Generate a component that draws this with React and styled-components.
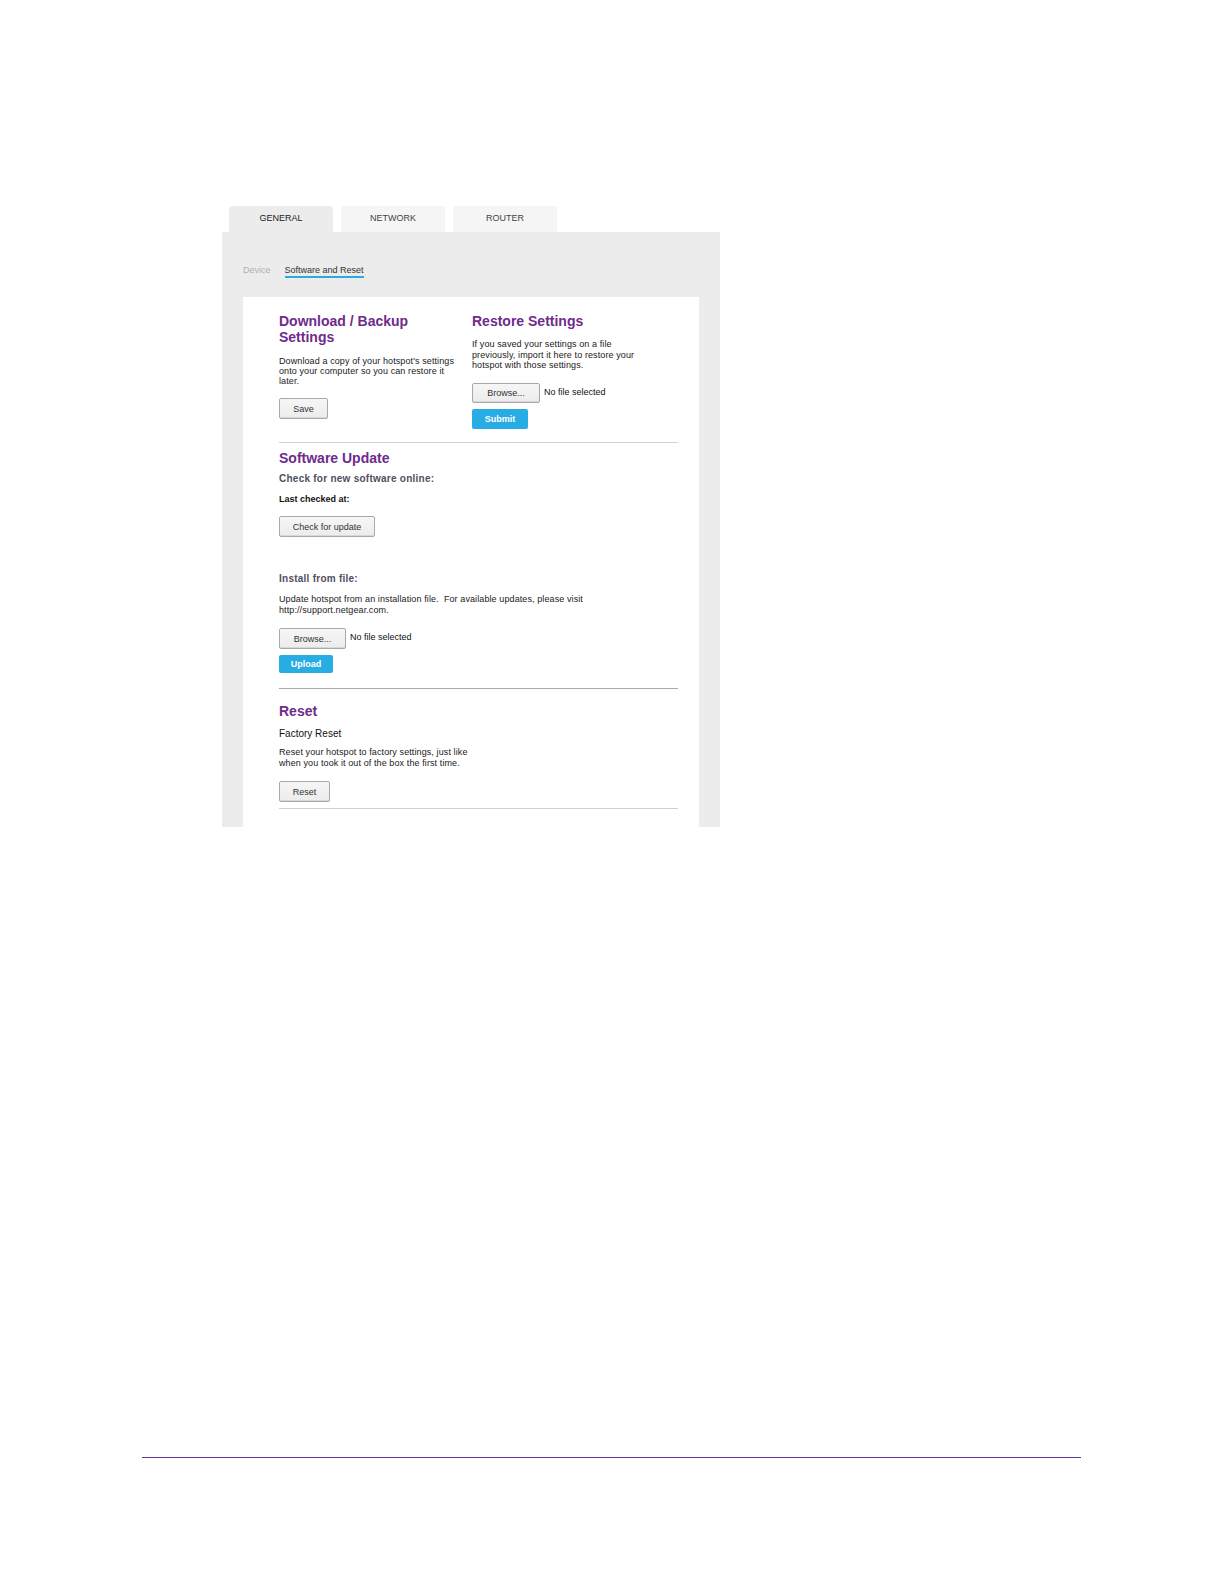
import React from "react";
import styled, { createGlobalStyle } from "styled-components";

const Global = createGlobalStyle`
  html, body { margin: 0; padding: 0; background: #ffffff; }
  body { font-family: "Liberation Sans", Arial, sans-serif; color: #222; }
  * { box-sizing: border-box; }
`;

const Page = styled.div`
  min-height: 1585px;
  padding-top: 206px;
  display: flex;
  flex-direction: column;
  align-items: flex-start;
`;

const Window = styled.div`
  margin-left: 222px;
  width: 498px;
  display: flex;
  flex-direction: column;
`;

const TabBar = styled.div`
  display: flex;
  gap: 8px;
  padding-left: 7px;
`;

const Tab = styled.div`
  width: 104px;
  height: 26px;
  border-radius: 4px 4px 0 0;
  background: ${(p) => (p.$active ? "#ececec" : "#f5f5f5")};
  color: ${(p) => (p.$active ? "#222" : "#444")};
  font-size: 9px;
  display: flex;
  align-items: center;
  justify-content: center;
  padding-bottom: 2px;
`;

const Panel = styled.div`
  background: #ececec;
  height: 595px;
  overflow: hidden;
  padding: 0 21px;
  display: flex;
  flex-direction: column;
`;

const SubNav = styled.div`
  height: 65px;
  padding-top: 32px;
  display: flex;
  align-items: flex-start;
  gap: 14px;
`;

const SubLink = styled.div`
  font-size: 9px;
  line-height: 12px;
  color: ${(p) => (p.$active ? "#333" : "#b0b0b0")};
  border-bottom: 2px solid ${(p) => (p.$active ? "#29abe2" : "transparent")};
`;

const Card = styled.div`
  background: #ffffff;
  flex: 1;
  padding: 16px 21px 0 36px;
  display: flex;
  flex-direction: column;
`;

const TopRow = styled.div`
  display: grid;
  grid-template-columns: 193px 1fr;
  padding-bottom: 13px;
`;

const Col = styled.div`
  display: flex;
  flex-direction: column;
  align-items: flex-start;
`;

const Heading = styled.h2`
  margin: ${(p) => p.$mt || 0}px 0 0 0;
  font-size: 14px;
  line-height: 16px;
  font-weight: bold;
  color: #6e2b8c;
`;

const Para = styled.p`
  margin: ${(p) => p.$mt || 0}px 0 0 0;
  font-size: 9px;
  line-height: ${(p) => p.$lh || 10}px;
  letter-spacing: 0.1px;
  color: #1a1a1a;
`;

const SubHead = styled.div`
  margin-top: ${(p) => p.$mt || 0}px;
  font-size: 10px;
  line-height: 14px;
  font-weight: bold;
  letter-spacing: 0.25px;
  color: #505060;
`;

const Label = styled.div`
  margin-top: ${(p) => p.$mt || 0}px;
  font-size: 9px;
  line-height: 12px;
  font-weight: bold;
  color: #111;
`;

const Plain = styled.div`
  margin-top: ${(p) => p.$mt || 0}px;
  font-size: 10px;
  line-height: 13px;
  color: #111;
`;

const Button = styled.button`
  margin-top: ${(p) => p.$mt || 0}px;
  width: ${(p) => p.$w}px;
  height: ${(p) => p.$h || 21}px;
  padding: 0;
  font-family: "Liberation Sans", Arial, sans-serif;
  font-size: 9px;
  color: #333;
  background: linear-gradient(#f6f6f6, #ececec);
  border: 1px solid #a8a8a8;
  border-radius: 2px;
  box-shadow: inset 0 -1px 0 #d8d8d8;
`;

const BlueButton = styled.button`
  margin-top: ${(p) => p.$mt || 0}px;
  width: ${(p) => p.$w}px;
  height: ${(p) => p.$h || 19}px;
  padding: 0;
  font-family: "Liberation Sans", Arial, sans-serif;
  font-size: 9px;
  font-weight: bold;
  color: #ffffff;
  background: #27ade3;
  border: none;
  border-radius: 2px;
`;

const FileRow = styled.div`
  margin-top: ${(p) => p.$mt || 0}px;
  display: flex;
  align-items: flex-start;
  gap: 4px;
`;

const FileName = styled.span`
  font-size: 9px;
  line-height: 12px;
  padding-top: 3px;
  color: #111;
`;

const Section = styled.div`
  display: flex;
  flex-direction: column;
  align-items: flex-start;
  padding-bottom: ${(p) => p.$pb || 0}px;
`;

const Divider = styled.div`
  height: 1px;
  background: ${(p) => p.$c || "#d4d4d4"};
`;

const FootRule = styled.div`
  margin-top: 630px;
  margin-left: 142px;
  width: 939px;
  height: 1px;
  background: #5f3596;
`;

export default function App() {
  return (
    <>
      <Global />
      <Page>
        <Window>
          <TabBar>
            <Tab $active>GENERAL</Tab>
            <Tab>NETWORK</Tab>
            <Tab>ROUTER</Tab>
          </TabBar>
          <Panel>
            <SubNav>
              <SubLink>Device</SubLink>
              <SubLink $active>Software and Reset</SubLink>
            </SubNav>
            <Card>
              <TopRow>
                <Col>
                  <Heading>
                    Download / Backup
                    <br />
                    Settings
                  </Heading>
                  <Para $mt={11}>
                    Download a copy of your hotspot's settings
                    <br />
                    onto your computer so you can restore it
                    <br />
                    later.
                  </Para>
                  <Button $mt={12} $w={49}>Save</Button>
                </Col>
                <Col>
                  <Heading>Restore Settings</Heading>
                  <Para $mt={10} $lh={10.7}>
                    If you saved your settings on a file
                    <br />
                    previously, import it here to restore your
                    <br />
                    hotspot with those settings.
                  </Para>
                  <FileRow $mt={12}>
                    <Button $w={68} $h={20}>Browse...</Button>
                    <FileName>No file selected</FileName>
                  </FileRow>
                  <BlueButton $mt={6} $w={56} $h={20}>Submit</BlueButton>
                </Col>
              </TopRow>
              <Divider $c="#d4d4d4" />
              <Section $pb={15}>
                <Heading $mt={7}>Software Update</Heading>
                <SubHead $mt={6}>Check for new software online:</SubHead>
                <Label $mt={7}>Last checked at:</Label>
                <Button $mt={11} $w={96}>Check for update</Button>
                <SubHead $mt={35}>Install from file:</SubHead>
                <Para $mt={8} $lh={11}>
                  Update hotspot from an installation file.&nbsp; For available updates, please visit
                  <br />
                  http://support.netgear.com.
                </Para>
                <FileRow $mt={12}>
                  <Button $w={67}>Browse...</Button>
                  <FileName>No file selected</FileName>
                </FileRow>
                <BlueButton $mt={6} $w={54} $h={18}>Upload</BlueButton>
              </Section>
              <Divider $c="#a9a9a9" />
              <Section $pb={6}>
                <Heading $mt={14}>Reset</Heading>
                <Plain $mt={8}>Factory Reset</Plain>
                <Para $mt={7} $lh={11}>
                  Reset your hotspot to factory settings, just like
                  <br />
                  when you took it out of the box the first time.
                </Para>
                <Button $mt={12} $w={51}>Reset</Button>
              </Section>
              <Divider $c="#d0d0d0" />
            </Card>
          </Panel>
        </Window>
        <FootRule />
      </Page>
    </>
  );
}
